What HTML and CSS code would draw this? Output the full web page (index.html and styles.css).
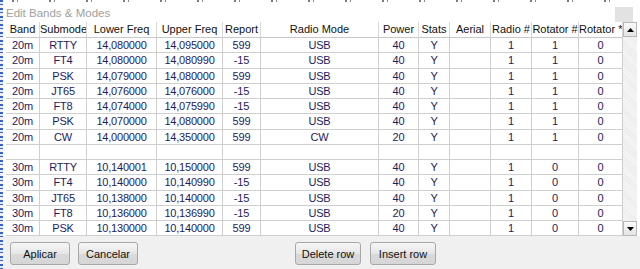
FILE: index.html
```html
<!DOCTYPE html>
<html>
<head>
<meta charset="utf-8">
<link rel="stylesheet" href="styles.css">
</head>
<body>
<div class="screen">
  <div class="leftstrip"></div>
  <div class="window">
    <div class="topstrip"></div>
    <div class="titlebar">
      <span class="title">Edit Bands &amp; Modes</span>
      <span class="closebox"></span>
    </div>
    <div class="gridwrap">
      <div class="grid">
        <div class="h">Band</div><div class="h">Submode</div><div class="h">Lower Freq</div><div class="h">Upper Freq</div><div class="h">Report</div><div class="h">Radio Mode</div><div class="h">Power</div><div class="h">Stats</div><div class="h">Aerial</div><div class="h">Radio #</div><div class="h">Rotator #</div><div class="h">Rotator *</div>

        <div>20m</div><div>RTTY</div><div>14,080000</div><div>14,095000</div><div>599</div><div>USB</div><div>40</div><div>Y</div><div></div><div>1</div><div>1</div><div>0</div>
        <div>20m</div><div>FT4</div><div>14,080000</div><div>14,080990</div><div>-15</div><div>USB</div><div>40</div><div>Y</div><div></div><div>1</div><div>1</div><div>0</div>
        <div>20m</div><div>PSK</div><div>14,079000</div><div>14,080000</div><div>599</div><div>USB</div><div>40</div><div>Y</div><div></div><div>1</div><div>1</div><div>0</div>
        <div>20m</div><div>JT65</div><div>14,076000</div><div>14,076000</div><div>-15</div><div>USB</div><div>40</div><div>Y</div><div></div><div>1</div><div>1</div><div>0</div>
        <div>20m</div><div>FT8</div><div>14,074000</div><div>14,075990</div><div>-15</div><div>USB</div><div>40</div><div>Y</div><div></div><div>1</div><div>1</div><div>0</div>
        <div>20m</div><div>PSK</div><div>14,070000</div><div>14,080000</div><div>599</div><div>USB</div><div>40</div><div>Y</div><div></div><div>1</div><div>1</div><div>0</div>
        <div>20m</div><div>CW</div><div>14,000000</div><div>14,350000</div><div>599</div><div>CW</div><div>20</div><div>Y</div><div></div><div>1</div><div>1</div><div>0</div>
        <div></div><div></div><div></div><div></div><div></div><div></div><div></div><div></div><div></div><div></div><div></div><div></div>
        <div>30m</div><div>RTTY</div><div>10,140001</div><div>10,150000</div><div>599</div><div>USB</div><div>40</div><div>Y</div><div></div><div>1</div><div>0</div><div>0</div>
        <div>30m</div><div>FT4</div><div>10,140000</div><div>10,140990</div><div>-15</div><div>USB</div><div>40</div><div>Y</div><div></div><div>1</div><div>0</div><div>0</div>
        <div>30m</div><div>JT65</div><div>10,138000</div><div>10,140000</div><div>-15</div><div>USB</div><div>40</div><div>Y</div><div></div><div>1</div><div>0</div><div>0</div>
        <div>30m</div><div>FT8</div><div>10,136000</div><div>10,136990</div><div>-15</div><div>USB</div><div>20</div><div>Y</div><div></div><div>1</div><div>0</div><div>0</div>
        <div>30m</div><div>PSK</div><div>10,130000</div><div>10,140000</div><div>599</div><div>USB</div><div>40</div><div>Y</div><div></div><div>1</div><div>0</div><div>0</div>
      </div>
      <div class="scrollbar">
        <div class="arrow"><svg width="7" height="4" viewBox="0 0 7 4"><polygon points="0,4 7,4 3.5,0" fill="#000"/></svg></div>
        <div class="track"></div>
        <div class="arrow"><svg width="7" height="4" viewBox="0 0 7 4"><polygon points="0,0 7,0 3.5,4" fill="#000"/></svg></div>
      </div>
    </div>
    <div class="buttons">
      <button class="btn">Aplicar</button>
      <button class="btn">Cancelar</button>
      <button class="btn btn-delete">Delete row</button>
      <button class="btn">Insert row</button>
    </div>
  </div>
</div>
</body>
</html>
```

FILE: styles.css
```css
* { box-sizing: border-box; }
html, body { margin: 0; padding: 0; }
body {
  width: 640px;
  height: 269px;
  overflow: hidden;
  background: #f0f0f0;
  font-family: "Liberation Sans", Arial, sans-serif;
  font-size: 11px;
}
.screen { display: flex; height: 269px; }
.leftstrip {
  width: 3px;
  flex: none;
  background:
    repeating-linear-gradient(to bottom, #3b5fc4 0 2px, #dfe8f5 2px 4px, #3b5fc4 4px 5px, #eef2f8 5px 8px);
}
.window { flex: 1; display: flex; flex-direction: column; background: #f0f0f0; }
.topstrip {
  height: 4px;
  background:
    repeating-linear-gradient(to right, transparent 0 9px, #7a7a7a 9px 11px, transparent 11px 14px, #8a8a8a 14px 15px, transparent 15px 37px) 0 0 / 100% 2px no-repeat,
    #fff;
}
.titlebar {
  height: 18px;
  background: #fff;
  display: flex;
  align-items: center;
  justify-content: space-between;
  padding-left: 3px;
  padding-right: 7px;
}
.title { color: #a0a0a0; font-size: 11.5px; }
.closebox {
  width: 18px;
  height: 15px;
  margin-top: 3px;
  background: #e2e2e2;
}
.gridwrap { display: flex; background: #fff; padding-left: 3px; }
.grid {
  width: 617px;
  display: grid;
  grid-template-columns: 34px 47px 70px 66px 38px 118px 40px 31px 41px 41px 47px 44px;
  grid-template-rows: 16px repeat(13, 15.25px);
  color: #1c1c5e;
  letter-spacing: -0.2px;
}
.grid > div {
  border-right: 1px solid #cfcfcf;
  border-bottom: 1px solid #cfcfcf;
  text-align: center;
  line-height: 14px;
  white-space: nowrap;
  overflow: hidden;
}
.grid > .h {
  color: #111;
  background: #fff;
  border-right: 1px solid #d8d8d8;
  border-bottom: 1px solid #c8c8c8;
  line-height: 15px;
  letter-spacing: 0;
}
.scrollbar {
  width: 14px;
  display: flex;
  flex-direction: column;
  background: #f2f2f2;
}
.arrow {
  height: 15px;
  border: 1px solid #b8b8b8;
  background: linear-gradient(#fafafa, #e4e4e4);
  display: flex;
  align-items: center;
  justify-content: center;
}
.track {
  flex: 1;
  background: repeating-linear-gradient(45deg, #f6f6f6 0 1px, #ececec 1px 2px);
}
.buttons {
  display: flex;
  padding-top: 6px;
  padding-left: 7px;
  gap: 8px;
}
.btn {
  height: 23px;
  width: 60px;
  padding: 0;
  border: 1px solid #a8a8a8;
  border-radius: 3px;
  background: linear-gradient(#f7f7f7, #e6e6e6 50%, #dadada 50%, #d6d6d6);
  font-family: "Liberation Sans", Arial, sans-serif;
  font-size: 11px;
  color: #111;
}
.btn-delete { margin-left: 149px; width: 66px; }
.btn-delete + .btn { width: 66px; margin-left: 1px; }
```
